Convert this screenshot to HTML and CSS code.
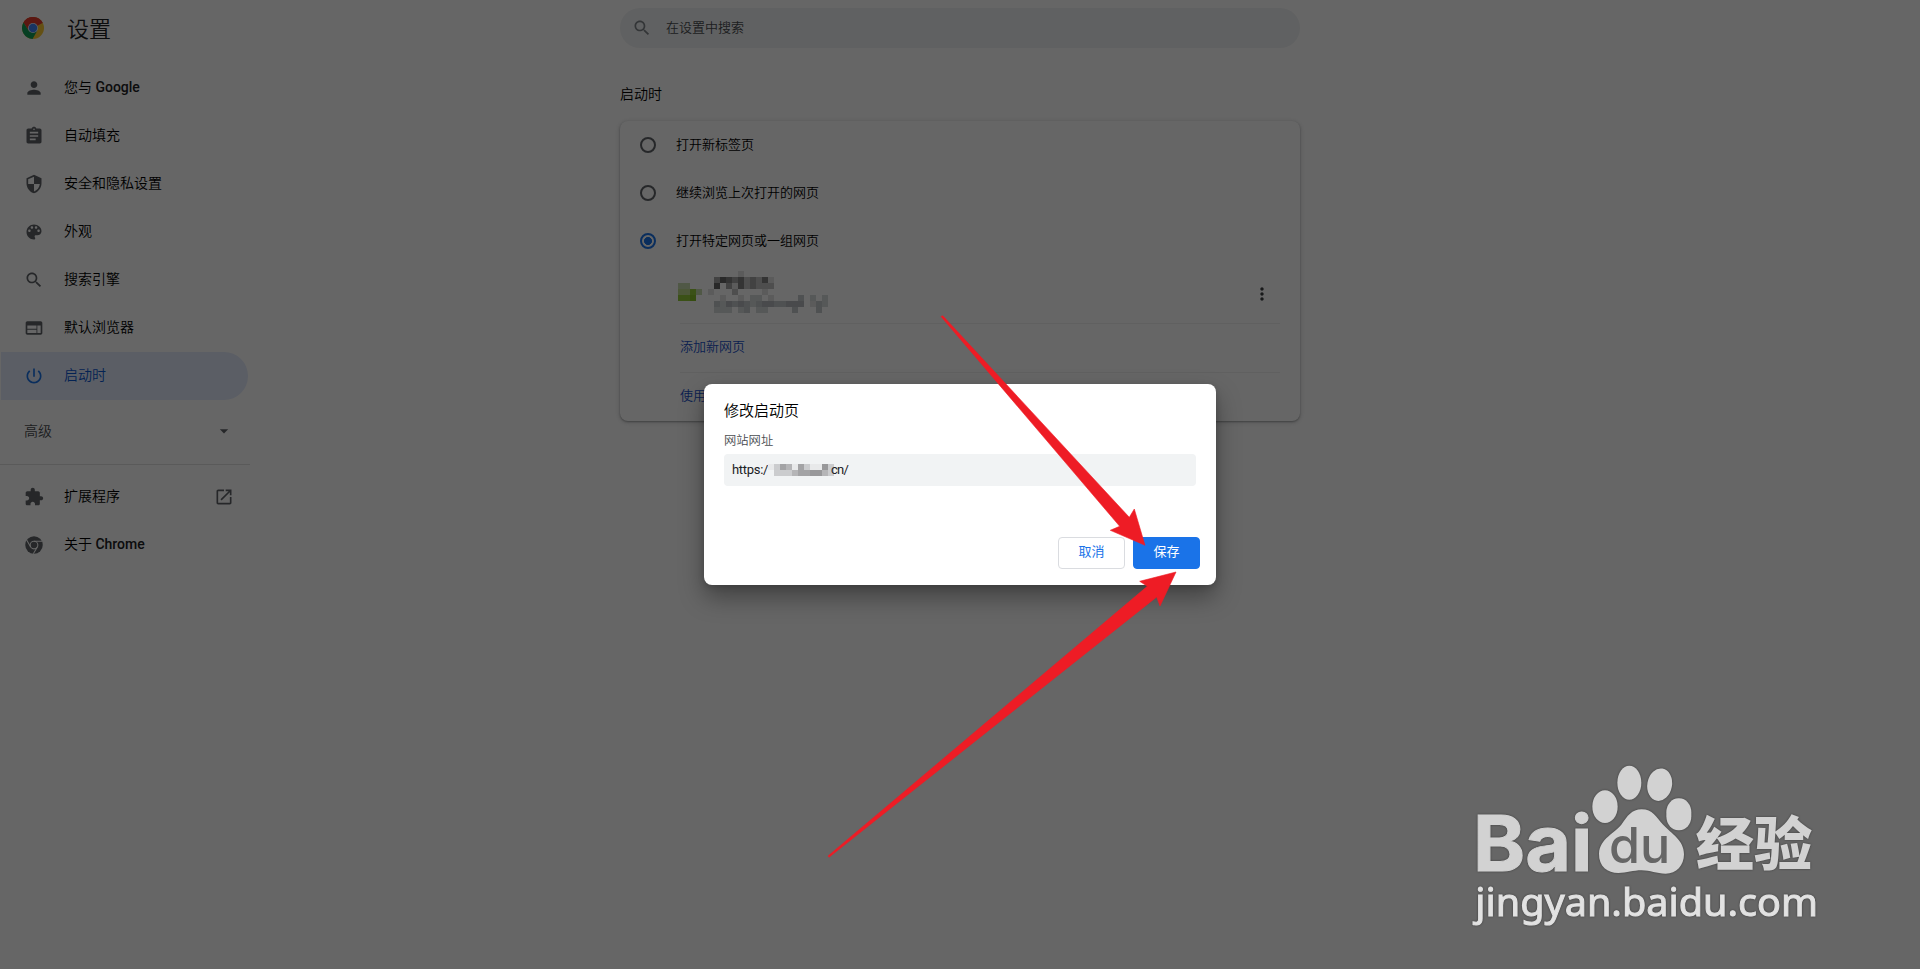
FILE: index.html
```html
<!DOCTYPE html>
<html lang="zh-CN">
<head>
    <meta charset="utf-8">
    <title>设置 - 启动时</title>
    <link rel="stylesheet" href="styles.css">
</head>
<body>
    <div class="page">
        <aside class="sidebar">
            <div class="brand">
                <svg class="logo" viewBox="0 0 24 24">
                    <circle cx="12" cy="12" r="12" fill="#fbc934"/>
                    <path fill="#e33b2e" d="M12 12 1.6 6A12 12 0 0 1 22.4 6.5z"/>
                    <path fill="#e33b2e" d="M12 6.5h10.7A12 12 0 0 0 1.6 6l5.6 8.7z"/>
                    <path fill="#0f9d58" d="M1.6 6A12 12 0 0 0 11.5 24l5.3-9.2L12 12l-4.8 2.7z"/>
                    <circle cx="12" cy="12" r="5.5" fill="#e8eefc"/>
                    <circle cx="12" cy="12" r="4.6" fill="#3f82f8"/>
                </svg>
                <h1>设置</h1>
            </div>
            <nav class="menu">
                <a class="item">
                    <svg class="icon" viewBox="0 0 24 24"><path d="M12 12c2.21 0 4-1.79 4-4s-1.79-4-4-4-4 1.79-4 4 1.79 4 4 4zm0 2c-2.67 0-8 1.34-8 4v2h16v-2c0-2.66-5.33-4-8-4z"/></svg>
                    <span>您与 <b>Google</b></span>
                </a>
                <a class="item">
                    <svg class="icon" viewBox="0 0 24 24"><path d="M19 3h-4.18C14.4 1.84 13.3 1 12 1c-1.3 0-2.4.84-2.82 2H5c-1.1 0-2 .9-2 2v14c0 1.1.9 2 2 2h14c1.1 0 2-.9 2-2V5c0-1.1-.9-2-2-2zm-7 0c.55 0 1 .45 1 1s-.45 1-1 1-1-.45-1-1 .45-1 1-1zm2 14H7v-2h7v2zm3-4H7v-2h10v2zm0-4H7V7h10v2z"/></svg>
                    <span>自动填充</span>
                </a>
                <a class="item">
                    <svg class="icon" viewBox="0 0 24 24"><path d="M12 1L3 5v6c0 5.55 3.84 10.74 9 12 5.16-1.26 9-6.45 9-12V5l-9-4zm0 10.99h7c-.53 4.12-3.28 7.79-7 8.94V12H5V6.3l7-3.11v8.8z"/></svg>
                    <span>安全和隐私设置</span>
                </a>
                <a class="item">
                    <svg class="icon" viewBox="0 0 24 24"><path d="M12 3c-4.97 0-9 4.03-9 9s4.03 9 9 9c.83 0 1.5-.67 1.5-1.5 0-.39-.15-.74-.39-1.01-.23-.26-.38-.61-.38-.99 0-.83.67-1.5 1.5-1.5H16c2.76 0 5-2.24 5-5 0-4.42-4.03-8-9-8zm-5.5 9c-.83 0-1.5-.67-1.5-1.5S5.67 9 6.5 9 8 9.67 8 10.5 7.33 12 6.5 12zm3-4C8.67 8 8 7.33 8 6.5S8.67 5 9.5 5s1.5.67 1.5 1.5S10.33 8 9.5 8zm5 0c-.83 0-1.5-.67-1.5-1.5S13.67 5 14.5 5s1.5.67 1.5 1.5S15.33 8 14.5 8zm3 4c-.83 0-1.5-.67-1.5-1.5S16.67 9 17.5 9s1.5.67 1.5 1.5-.67 1.5-1.5 1.5z"/></svg>
                    <span>外观</span>
                </a>
                <a class="item">
                    <svg class="icon" viewBox="0 0 24 24"><path d="M15.5 14h-.79l-.28-.27C15.41 12.59 16 11.11 16 9.5 16 5.91 13.09 3 9.5 3S3 5.91 3 9.5 5.91 16 9.5 16c1.61 0 3.09-.59 4.23-1.57l.27.28v.79l5 4.99L20.49 19l-4.99-5zm-6 0C7.01 14 5 11.99 5 9.5S7.01 5 9.5 5 14 7.01 14 9.5 11.99 14 9.5 14z"/></svg>
                    <span>搜索引擎</span>
                </a>
                <a class="item">
                    <svg class="icon" viewBox="0 0 24 24"><path d="M20 4H4c-1.1 0-1.99.9-1.99 2L2 18c0 1.1.9 2 2 2h16c1.1 0 2-.9 2-2V6c0-1.1-.9-2-2-2zm-5 14H4v-4h11v4zm0-5H4V9h11v4zm5 5h-4V9h4v9z"/></svg>
                    <span>默认浏览器</span>
                </a>
                <a class="item selected">
                    <svg class="icon" viewBox="0 0 24 24"><path d="M13 3h-2v10h2V3zm4.83 2.17l-1.42 1.42C17.99 7.86 19 9.81 19 12c0 3.87-3.13 7-7 7s-7-3.13-7-7c0-2.19 1.01-4.14 2.58-5.42L6.17 5.17C4.23 6.82 3 9.26 3 12c0 4.97 4.03 9 9 9s9-4.03 9-9c0-2.74-1.23-5.18-3.17-6.83z"/></svg>
                    <span>启动时</span>
                </a>
            </nav>
            <div class="advanced">
                <span>高级</span>
                <svg class="icon" viewBox="0 0 24 24"><path d="M7 10l5 5 5-5z"/></svg>
            </div>
            <nav class="menu more">
                <a class="item">
                    <svg class="icon" viewBox="0 0 24 24"><path d="M20.5 11H19V7c0-1.1-.9-2-2-2h-4V3.5C13 2.12 11.88 1 10.5 1S8 2.12 8 3.5V5H4c-1.1 0-1.99.9-1.99 2v3.8H3.5c1.49 0 2.7 1.21 2.7 2.7s-1.21 2.7-2.7 2.7H2V20c0 1.1.9 2 2 2h3.8v-1.5c0-1.49 1.21-2.7 2.7-2.7 1.49 0 2.7 1.21 2.7 2.7V22H17c1.1 0 2-.9 2-2v-4h1.5c1.38 0 2.5-1.12 2.5-2.5S21.88 11 20.5 11z"/></svg>
                    <span>扩展程序</span>
                    <svg class="icon external" viewBox="0 0 24 24"><path d="M19 19H5V5h7V3H5c-1.11 0-2 .9-2 2v14c0 1.1.89 2 2 2h14c1.1 0 2-.9 2-2v-7h-2v7zM14 3v2h3.59l-9.83 9.83 1.41 1.41L19 6.41V10h2V3h-7z"/></svg>
                </a>
                <a class="item">
                    <svg class="icon" viewBox="0 0 24 24">
                        <circle cx="12" cy="12" r="10.5"/>
                        <g fill="none" stroke="#fff" stroke-width="1.3">
                            <circle cx="12" cy="12" r="4.6"/>
                            <path d="M12 7.4h9.6M8 14.3 3.2 6M16 14.3l-4.8 8.3"/>
                        </g>
                    </svg>
                    <span>关于 <b>Chrome</b></span>
                </a>
            </nav>
        </aside>

        <main class="content">
            <div class="search">
                <svg class="icon" viewBox="0 0 24 24"><path d="M15.5 14h-.79l-.28-.27C15.41 12.59 16 11.11 16 9.5 16 5.91 13.09 3 9.5 3S3 5.91 3 9.5 5.91 16 9.5 16c1.61 0 3.09-.59 4.23-1.57l.27.28v.79l5 4.99L20.49 19l-4.99-5zm-6 0C7.01 14 5 11.99 5 9.5S7.01 5 9.5 5 14 7.01 14 9.5 11.99 14 9.5 14z"/></svg>
                <span>在设置中搜索</span>
            </div>
            <h2>启动时</h2>
            <section class="card">
                <div class="option"><i class="radio"></i><span>打开新标签页</span></div>
                <div class="option"><i class="radio"></i><span>继续浏览上次打开的网页</span></div>
                <div class="option"><i class="radio checked"></i><span>打开特定网页或一组网页</span></div>
                <div class="pages">
                    <div class="row site">
                        <svg class="site-mosaic" viewBox="0 0 25 7" shape-rendering="crispEdges">
                            <g transform="translate(0 .5)" fill="none">
                                <path stroke="#c9dcae" d="M0 2h2M3 3h1"/>
                                <path stroke="#bdd98c" d="M0 3h2"/>
                                <path stroke="#93cb3a" d="M0 4h2M2 3h1"/>
                                <path stroke="#87c02a" d="M2 4h1"/>
                                <path stroke="#666" d="M7 1h1M6 2h1"/>
                                <path stroke="#828282" d="M8 1h1M10 1h1M10 2h1M14 1h1"/>
                                <path stroke="#a6a6a6" d="M6 1h1M9 1h1M12 1h1M8 2h1M12 2h1"/>
                                <path stroke="#c4c4c4" d="M11 1h1M13 1h1M11 2h1M13 2h3M9 3h1"/>
                                <path stroke="#e4e4e4" d="M10 0h1M15 1h1M9 2h1M5 3h1M14 3h1M10 4h1M7 4h1M15 4h1M22 5h1"/>
                                <path stroke="#d6dbdc" d="M12 4h2M22 4h1M24 4h1M7 5h1M12 5h1M6 6h3M10 6h1M13 6h2M24 5h1"/>
                                <path stroke="#c6cacd" d="M20 4h1M6 5h1M9 5h1M11 5h1M13 5h1M16 5h2M23 5h1M11 6h1M19 6h1M23 6h1"/>
                                <path stroke="#b7babf" d="M8 5h1M10 5h1M14 5h2M18 5h3"/>
                            </g>
                        </svg>
                        <svg class="icon dots" viewBox="0 0 24 24"><path d="M12 8c1.1 0 2-.9 2-2s-.9-2-2-2-2 .9-2 2 .9 2 2 2zm0 2c-1.1 0-2 .9-2 2s.9 2 2 2 2-.9 2-2-.9-2-2-2zm0 6c-1.1 0-2 .9-2 2s.9 2 2 2 2-.9 2-2-.9-2-2-2z"/></svg>
                    </div>
                    <div class="row link">添加新网页</div>
                    <div class="row link">使用当前网页</div>
                </div>
            </section>
        </main>
    </div>

    <div class="backdrop">
        <div class="dialog">
            <h3>修改启动页</h3>
            <label>网站网址</label>
            <div class="field">
                <span class="scheme">https:/</span>
                <svg class="url-mosaic" viewBox="0 0 11 2" shape-rendering="crispEdges">
                    <g transform="translate(0 .5)" fill="none">
                        <path stroke="#e8e9ea" d="M0 0h1M4 0h1M7 0h1M8 0h1"/>
                        <path stroke="#cbccce" d="M1 0h1M6 0h1M10 0h1M1 1h3M10 1h1"/>
                        <path stroke="#b5b5b7" d="M3 0h1M4 1h1M9 1h1"/>
                        <path stroke="#a3a3a5" d="M2 0h1M5 0h1M5 1h2"/>
                        <path stroke="#98989a" d="M9 0h1M7 1h2"/>
                    </g>
                </svg>
                <span class="host">cn/</span>
            </div>
            <div class="actions">
                <button class="btn">取消</button>
                <button class="btn primary">保存</button>
            </div>
        </div>
    </div>

    <svg class="arrows" viewBox="0 0 1920 969">
        <path d="M941 316.5 942.8 315.8 1129.3 517.3 1134.3 509 1145 545.3 1110.3 530.3 1119.7 526.3z"/>
        <path d="M828 856 1147.3 586.3 1139.7 581.3 1176 572 1160 606 1156.7 597 829 857.3z"/>
    </svg>

    <svg class="watermark" viewBox="0 0 1200 657">
        <text class="wm-bai" x="69" y="363" textLength="358" lengthAdjust="spacingAndGlyphs">Bai</text>
        <g class="paw">
            <ellipse cx="465" cy="170" rx="38" ry="49"/>
            <ellipse cx="538" cy="98" rx="36" ry="51"/>
            <ellipse cx="629" cy="104" rx="37" ry="49" transform="rotate(10 629 104)"/>
            <rect x="649" y="145" width="75" height="96" rx="36" ry="42"/>
            <path d="M575 178c-30 0-43 20-60 45-18 26-66 42-68 88-1 38 26 58 58 58 26 0 44-8 70-8s44 10 72 10c32 0 55-24 55-58 0-42-36-60-64-90-20-22-30-45-63-45z"/>
        </g>
        <text class="wm-du" x="477" y="338" textLength="184" lengthAdjust="spacingAndGlyphs">du</text>
        <text class="wm-cn" x="737" y="346" textLength="350" lengthAdjust="spacingAndGlyphs">经验</text>
        <text class="wm-url" x="76" y="498" textLength="1028" lengthAdjust="spacingAndGlyphs">jingyan.baidu.com</text>
    </svg>
</body>
</html>
```

FILE: styles.css
```css
* {
    box-sizing: border-box;
}
body {
    margin: 0;
    height: 969px;
    overflow: hidden;
    background: #fff;
    color: #202124;
    font-family: Roboto, "Noto Sans CJK SC", sans-serif;
    font-size: 13px;
    font-weight: 350;
}
h1, h2, h3 {
    margin: 0;
    font-weight: 350;
}
.page {
    display: grid;
    grid-template-columns: 620px 680px;
    height: 969px;
}
.icon {
    width: 20px;
    height: 20px;
    fill: #5f6368;
    flex: none;
}

/* sidebar */
.brand {
    display: flex;
    align-items: center;
    height: 56px;
    padding-left: 22px;
}
.logo {
    width: 22px;
    height: 22px;
}
.brand h1 {
    margin-left: 23px;
    font-size: 22px;
    line-height: 56px;
    padding-top: 3px;
}
.menu {
    width: 248px;
    padding: 8px 0 0 1px;
}
.item {
    display: flex;
    align-items: center;
    gap: 20px;
    height: 48px;
    padding-left: 23px;
    color: #000;
    font-size: 14px;
}
.item span {
    padding-bottom: 4px;
}
.item b {
    color: #202124;
    font-weight: 500;
}
.selected {
    background: #e3ebfc;
    border-radius: 0 24px 24px 0;
    color: #0b57d0;
}
.selected .icon {
    fill: #1a73e8;
}
.external {
    margin-left: auto;
    margin-right: 14px;
}
.advanced {
    display: flex;
    justify-content: space-between;
    align-items: center;
    width: 250px;
    height: 65px;
    padding: 0 16px 2px 24px;
    border-bottom: 1px solid #e0e0e0;
    color: #4a4d51;
    font-size: 14px;
}
.advanced span {
    padding-bottom: 3px;
}

/* content */
.search {
    display: flex;
    align-items: center;
    gap: 14px;
    height: 40px;
    margin-top: 8px;
    padding: 0 12px 1px;
    border-radius: 20px;
    background: #f1f3f4;
    color: #4a4d51;
}
.search span {
    padding-bottom: 2px;
}
.search .icon {
    fill: #80868b;
}
.content h2 {
    height: 73px;
    padding-top: 36px;
    color: #000;
    font-size: 14px;
    line-height: 20px;
}
.card {
    height: 300px;
    border-radius: 8px;
    background: #fff;
    box-shadow: 0 1px 2px rgba(60, 64, 67, .4), 0 1px 4px 1px rgba(60, 64, 67, .16);
}
.option {
    display: flex;
    align-items: center;
    gap: 20px;
    height: 48px;
    padding-left: 20px;
    color: #000;
}
.option span {
    padding-bottom: 4px;
}
.radio {
    width: 16px;
    height: 16px;
    border: 2px solid #5f6368;
    border-radius: 50%;
}
.checked {
    border-color: #1a73e8;
    background: radial-gradient(circle, #1a73e8 3.7px, transparent 4.3px);
}
.pages {
    margin: 0 20px 0 60px;
}
.row {
    display: flex;
    align-items: center;
    height: 49px;
}
.row + .row {
    border-top: 1px solid #f0f0f0;
}
.site {
    justify-content: space-between;
    height: 58px;
    padding-right: 8px;
}
.site-mosaic {
    width: 150px;
    height: 42px;
    margin: -5px 0 0 -2px;
}
.link {
    padding-bottom: 5px;
    color: #2050c8;
}
.dots {
    fill: #3c4043;
}

/* dialog */
.backdrop {
    position: absolute;
    inset: 0;
    display: flex;
    align-items: center;
    justify-content: center;
    background: rgba(0, 0, 0, .6);
}
.dialog {
    width: 512px;
    height: 201px;
    padding: 16px 20px;
    border-radius: 8px;
    background: #fff;
    box-shadow: 0 12px 24px rgba(0, 0, 0, .36), 0 2px 6px rgba(0, 0, 0, .15);
}
.dialog h3 {
    color: #000;
    font-size: 15px;
    line-height: 20px;
    padding-top: 1px;
}
.dialog label {
    display: block;
    height: 16px;
    margin: 12px 0 5px;
    color: #4a4d51;
    font-size: 12.3px;
    line-height: 17px;
}
.field {
    display: flex;
    align-items: center;
    height: 32px;
    padding: 0 8px 1px;
    border-radius: 4px;
    background: #f1f3f4;
    font-weight: 400;
    letter-spacing: -.3px;
}
.scheme {
    width: 36px;
}
.url-mosaic {
    width: 66px;
    height: 12px;
    margin-right: -3px;
}
.host {
    letter-spacing: -.8px;
}
.actions {
    display: flex;
    justify-content: flex-end;
    gap: 8px;
    margin: 51px -4px 0 0;
}
.btn {
    width: 67px;
    height: 32px;
    padding: 0 0 5px;
    border: 1px solid #dadce0;
    border-radius: 4px;
    background: #fff;
    color: #1a73e8;
    font: 400 13px Roboto, "Noto Sans CJK SC", sans-serif;
}
.primary {
    border-color: #1a73e8;
    background: #1a73e8;
    color: #fff;
}

/* annotations over the page */
.arrows {
    position: absolute;
    top: 0;
    left: 0;
    width: 1920px;
    height: 969px;
    fill: #ee1c25;
    stroke: #ee1c25;
    stroke-width: .6;
}
.watermark {
    position: absolute;
    left: 1450px;
    top: 750px;
    width: 400px;
    height: 219px;
    fill: #d2d2d2;
    filter: drop-shadow(0 0 1px rgba(0, 0, 0, .4));
}
.wm-bai {
    font: 700 232px Inter, "Liberation Sans", sans-serif;
    stroke: #d2d2d2;
    stroke-width: 3;
}
.wm-du {
    font: 500 146px Inter, "Liberation Sans", sans-serif;
    fill: #666;
}
.wm-cn {
    font: 900 174px "Noto Sans CJK SC", sans-serif;
}
.wm-url {
    font: 400 115px "Noto Sans", sans-serif;
    fill: #e2e2e2;
    stroke: #e2e2e2;
    stroke-width: 3;
}
```
